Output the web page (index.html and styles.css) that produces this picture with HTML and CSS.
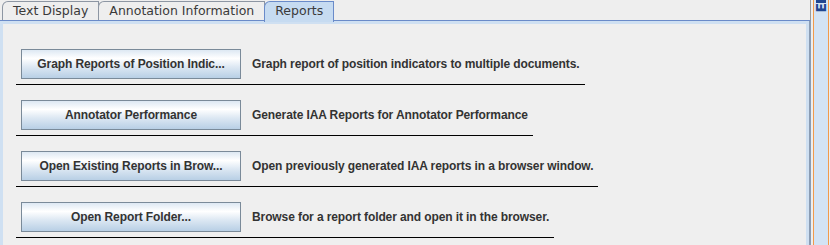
FILE: index.html
```html
<!DOCTYPE html>
<html lang="en">

<head>
    <meta charset="UTF-8">
    <title>Reports</title>
    <link rel="stylesheet" href="styles.css">
</head>

<body>
    <div class="window">
        <div class="tab-pane">
            <div class="tab-bar">
                <div class="tab">Text Display</div>
                <div class="tab">Annotation Information</div>
                <div class="tab selected">Reports</div>
            </div>
            <div class="tab-body">
                <div class="tab-inner">
                    <div class="report-row">
                        <button class="report-button">Graph Reports of Position Indic...</button>
                        <span class="report-label">Graph report of position indicators to multiple documents.</span>
                    </div>
                    <div class="report-row">
                        <button class="report-button">Annotator Performance</button>
                        <span class="report-label">Generate IAA Reports for Annotator Performance</span>
                    </div>
                    <div class="report-row">
                        <button class="report-button">Open Existing Reports in Brow...</button>
                        <span class="report-label">Open previously generated IAA reports in a browser window.</span>
                    </div>
                    <div class="report-row">
                        <button class="report-button">Open Report Folder...</button>
                        <span class="report-label">Browse for a report folder and open it in the browser.</span>
                    </div>
                </div>
            </div>
        </div>
        <div class="side-strip">
            <div class="side-bar"></div>
            <div class="side-label">E</div>
        </div>
    </div>
</body>

</html>
```

FILE: styles.css
```css
body {
    margin: 0;
    padding: 0;
    background: #eeeeee;
    font-family: "DejaVu Sans", sans-serif;
}

.window {
    display: flex;
    width: 830px;
    height: 245px;
}

.tab-pane {
    width: 811px;
    display: flex;
    flex-direction: column;
    border-right: 2px solid #eeeeee;
}

.tab-bar {
    display: flex;
    height: 19px;
    padding-top: 1px;
    padding-left: 2px;
    box-shadow: inset -1px 0 0 #9a9a9a;
}

.tab {
    height: 18px;
    padding: 0 10px;
    font-size: 12.5px;
    line-height: 18px;
    color: #3a3a3a;
    border: 1px solid #8d96a3;
    border-bottom: none;
    border-top-left-radius: 6px;
    margin-right: -1px;
    background: #eeeeee;
}

.tab.selected {
    background: #c6dbf1;
    border-color: #6a8bc9;
    height: 20px;
    margin-bottom: -4px;
    position: relative;
    z-index: 2;
}

.tab-body {
    flex: 1;
    border-top: 1px solid #6a8bc9;
    border-right: 2px solid #8b9cb2;
    display: flex;
}

.tab-inner {
    flex: 1;
    border: 3px solid #cfe0f2;
    border-bottom: none;
    background: #efefef;
    padding: 20px 0 0 13px;
}

.report-row {
    display: flex;
    align-items: center;
    width: fit-content;
    padding: 5px;
    margin-bottom: 10px;
    border-bottom: 1px solid #000000;
}

.report-button {
    width: 220px;
    height: 30px;
    padding: 0;
    font-family: "Liberation Sans", Arial, sans-serif;
    font-size: 12px;
    font-weight: bold;
    letter-spacing: -0.1px;
    color: #333333;
    border: 1px solid #7a8a99;
    background: linear-gradient(#dde8f3 0%, #ffffff 30%, #dde8f3 60%, #b8cfe5 100%);
}

.report-label {
    margin-left: 11px;
    font-family: "Liberation Sans", Arial, sans-serif;
    font-size: 12px;
    font-weight: bold;
    letter-spacing: -0.1px;
    color: #333333;
}

.side-strip {
    width: 14px;
    background: #d3e3f4;
    border-left: 1px solid #f29a4a;
    border-right: 1px solid #f29a4a;
    overflow: hidden;
}

.side-bar {
    width: 10px;
    height: 3px;
    margin-left: 2px;
    background: #1f4590;
}

.side-label {
    writing-mode: vertical-rl;
    transform: rotate(180deg);
    width: 10px;
    margin-left: 2px;
    font-size: 14px;
    font-weight: bold;
    line-height: 10px;
    color: #1f4590;
}
```
